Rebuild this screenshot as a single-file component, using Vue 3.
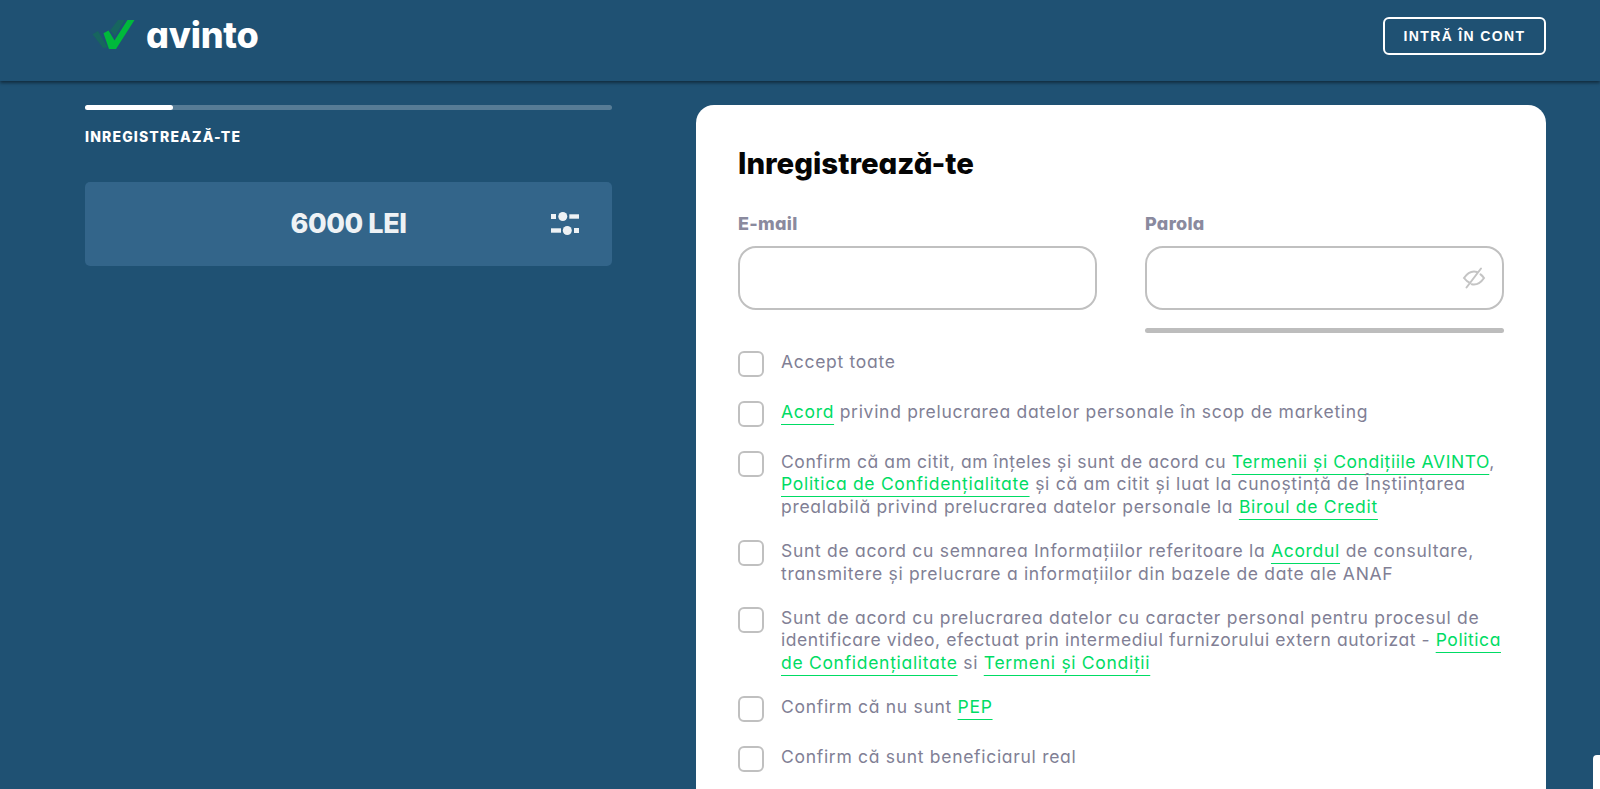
<script setup>
const pageTitle = 'Inregistrează-te'
</script>

<template>
  <div class="page">
    <header class="topbar">
      <a class="logo">
        <svg class="logo-mark" viewBox="0 0 44 32" width="44" height="32" xmlns="http://www.w3.org/2000/svg">
          <path d="M0.5 15.2 L6 12 L16 28.6 L11 29 Z" fill="#17655f" />
          <path d="M18 11.5 L26 1 L33 1 L23 17 Z" fill="#17655f" />
          <path d="M11.5 14.2 L16.5 11.5 L22.5 21.5 L35.5 1 L42.5 1 L24 30 L17 30 Z" fill="#00b93b" />
        </svg>
        <span class="logo-text">avinto</span>
      </a>
      <button class="login-btn">INTRĂ ÎN CONT</button>
    </header>

    <main class="content">
      <aside class="side">
        <div class="progress"><div class="progress-fill"></div></div>
        <div class="step">INREGISTREAZĂ-TE</div>
        <div class="amount">
          <span class="amount-value">6000 LEI</span>
          <svg class="amount-icon" viewBox="0 0 28 23" width="28" height="23" xmlns="http://www.w3.org/2000/svg">
            <rect x="0" y="2" width="5" height="5" fill="#eef2f5" />
            <circle cx="11.8" cy="4.5" r="4.5" fill="#eef2f5" />
            <rect x="18.3" y="2.3" width="9.7" height="4.4" fill="#eef2f5" />
            <rect x="0" y="16.3" width="10" height="4.4" fill="#eef2f5" />
            <circle cx="16.3" cy="18.5" r="4.5" fill="#eef2f5" />
            <rect x="23" y="16" width="5" height="5" fill="#eef2f5" />
          </svg>
        </div>
      </aside>

      <section class="card">
        <h1 class="title">{{ pageTitle }}</h1>

        <div class="fields">
          <label class="field">
            <span class="field-label">E-mail</span>
            <input class="input" type="text" />
          </label>
          <label class="field">
            <span class="field-label">Parola</span>
            <span class="input-wrap">
              <input class="input" type="password" />
              <svg class="eye" viewBox="0 0 24 24" width="24" height="24" fill="none" stroke="#c4c4c4" stroke-width="2" stroke-linecap="round" xmlns="http://www.w3.org/2000/svg">
                <path d="M8.2 17.2 C5.6 16 3.6 14 2 12 C5 7.5 8.5 5.5 12 5.5 C13 5.5 14 5.7 15 6" />
                <path d="M18.5 8.4 C20 9.4 21 10.6 22 12 C19 16.5 15.5 18.5 12 18.5 C11.2 18.5 10.5 18.4 9.8 18.2" />
                <path d="M19 2.5 L4.5 21.5" />
              </svg>
            </span>
            <span class="strength"></span>
          </label>
        </div>

        <div class="checks">
          <label class="check">
            <input class="box" type="checkbox" />
            <span class="check-text">Accept toate</span>
          </label>
          <label class="check">
            <input class="box" type="checkbox" />
            <span class="check-text"><a class="link">Acord</a> privind prelucrarea datelor personale în scop de marketing</span>
          </label>
          <label class="check">
            <input class="box" type="checkbox" />
            <span class="check-text"><span class="tight">Confirm că am citit, am înțeles și sunt de acord cu <a class="link">Termenii și Condițiile AVINTO</a>,</span><br /><a class="link">Politica de Confidențialitate</a> și că am citit și luat la cunoștință de Înștiințarea<br />prealabilă privind prelucrarea datelor personale la <a class="link">Biroul de Credit</a></span>
          </label>
          <label class="check">
            <input class="box" type="checkbox" />
            <span class="check-text">Sunt de acord cu semnarea Informațiilor referitoare la <a class="link">Acordul</a> de consultare,<br />transmitere și prelucrare a informațiilor din bazele de date ale ANAF</span>
          </label>
          <label class="check">
            <input class="box" type="checkbox" />
            <span class="check-text">Sunt de acord cu prelucrarea datelor cu caracter personal pentru procesul de<br /><span class="tight">identificare video, efectuat prin intermediul furnizorului extern autorizat - <a class="link">Politica</a></span><br /><a class="link">de Confidențialitate</a> si <a class="link">Termeni și Condiții</a></span>
          </label>
          <label class="check">
            <input class="box" type="checkbox" />
            <span class="check-text">Confirm că nu sunt <a class="link">PEP</a></span>
          </label>
          <label class="check">
            <input class="box" type="checkbox" />
            <span class="check-text">Confirm că sunt beneficiarul real</span>
          </label>
        </div>
      </section>
    </main>

    <div class="chat-tab"></div>
  </div>
</template>

<style>
html,
body {
  margin: 0;
  overflow: hidden;
  background: #1f5173;
}
</style>

<style scoped>
.page {
  position: relative;
  height: 789px;
  overflow: hidden;
  background: #1f5173;
  font-family: Inter, "Noto Sans", sans-serif;
  font-feature-settings: "cv11";
}

.topbar {
  position: relative;
  box-sizing: border-box;
  height: 81px;
  padding: 17px 54px 0 92px;
  display: flex;
  justify-content: space-between;
  align-items: flex-start;
  box-shadow: 0 2px 3px rgba(0, 0, 0, 0.45);
}

.logo {
  display: flex;
  align-items: center;
  gap: 10px;
  height: 36px;
}

.logo-text {
  font-size: 36px;
  font-weight: 800;
  color: #fff;
  letter-spacing: -0.2px;
}

.login-btn {
  box-sizing: border-box;
  width: 163px;
  height: 38px;
  padding: 0;
  border: 2px solid #fff;
  border-radius: 6px;
  background: transparent;
  color: #fff;
  font-family: "Liberation Sans", Arial, sans-serif;
  font-size: 14px;
  font-weight: 700;
  letter-spacing: 1.35px;
}

.content {
  display: grid;
  grid-template-columns: 527px 850px;
  column-gap: 84px;
  padding: 24px 54px 0 85px;
}

.progress {
  height: 5px;
  border-radius: 3px;
  background: rgba(255, 255, 255, 0.25);
}

.progress-fill {
  width: 88px;
  height: 100%;
  border-radius: 3px;
  background: #fff;
}

.step {
  margin-top: 18px;
  color: #fff;
  font-size: 14px;
  line-height: 17px;
  font-weight: 800;
  letter-spacing: 1.15px;
}

.amount {
  position: relative;
  box-sizing: border-box;
  height: 84px;
  margin-top: 37px;
  display: flex;
  align-items: center;
  justify-content: center;
  border-radius: 5px;
  background: #33658a;
}

.amount-value {
  color: #eef2f5;
  font-size: 27px;
  font-weight: 800;
  letter-spacing: -0.4px;
  margin-top: -2px;
}

.amount-icon {
  position: absolute;
  right: 33px;
  top: 30px;
}

.card {
  box-sizing: border-box;
  height: 760px;
  padding: 43px 42px 0;
  border-radius: 18px;
  background: #fff;
}

.title {
  margin: 0;
  color: #050505;
  font-size: 29.4px;
  line-height: 32px;
  font-weight: 800;
}

.fields {
  margin-top: 33px;
  display: grid;
  grid-template-columns: 359px 359px;
  column-gap: 48px;
}

.field {
  display: flex;
  flex-direction: column;
}

.field-label {
  color: #8a8a9e;
  font-size: 18px;
  line-height: 22px;
  font-weight: 800;
  letter-spacing: 0.3px;
}

.input-wrap {
  position: relative;
  display: block;
}

.input {
  display: block;
  box-sizing: border-box;
  width: 100%;
  height: 64px;
  margin-top: 11px;
  border: 2px solid #c0c0c0;
  border-radius: 18px;
  background: #fff;
  outline: none;
}

.eye {
  position: absolute;
  right: 18px;
  top: 31px;
}

.strength {
  display: block;
  height: 5px;
  margin-top: 18px;
  border-radius: 3px;
  background: #bdbdbd;
}

.checks {
  position: relative;
  margin-top: 17px;
  display: flex;
  flex-direction: column;
  gap: 22px;
}

.check {
  display: flex;
  align-items: flex-start;
  gap: 17px;
  min-height: 28px;
}

.box {
  appearance: none;
  flex: none;
  box-sizing: border-box;
  width: 26px;
  height: 26px;
  margin: 1px 0 0;
  border: 2px solid #c0c0c0;
  border-radius: 6px;
  background: #fff;
}

.check-text {
  margin: 1px 0 -1px;
  color: #817f95;
  font-size: 17.5px;
  line-height: 22.4px;
  letter-spacing: 0.7px;
  white-space: nowrap;
}

.tight {
  letter-spacing: 0.57px;
}

.link {
  color: #00dc64;
  text-decoration: underline;
  text-decoration-thickness: 1px;
  text-underline-offset: 6px;
  text-decoration-skip-ink: none;
}

.chat-tab {
  position: absolute;
  right: 0;
  top: 755px;
  width: 7px;
  height: 34px;
  border-top-left-radius: 4px;
  background: #fff;
}
</style>
